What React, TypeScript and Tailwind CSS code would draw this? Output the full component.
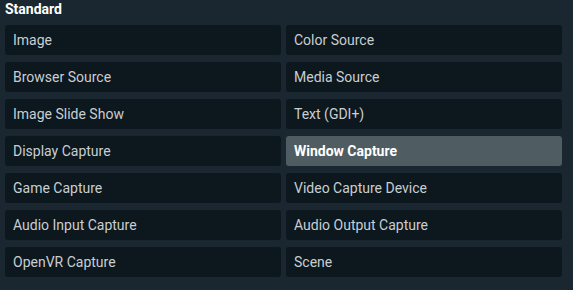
const items = [
  'Image',
  'Color Source',
  'Browser Source',
  'Media Source',
  'Image Slide Show',
  'Text (GDI+)',
  'Display Capture',
  'Window Capture',
  'Game Capture',
  'Video Capture Device',
  'Audio Input Capture',
  'Audio Output Capture',
  'OpenVR Capture',
  'Scene',
]

const selected = 'Window Capture'

export default function App() {
  return (
    <div
      className="h-[290px] w-[573px] bg-[#1a2730] pl-[5px] pt-[1px]"
      style={{ fontFamily: 'Roboto, "Liberation Sans", sans-serif' }}
    >
      <div className="h-[24px] text-[14px] font-bold leading-[16px] text-white">Standard</div>
      <div className="grid w-[557px] grid-cols-2 gap-x-[5px] gap-y-[7px]">
        {items.map((name) => {
          const active = name === selected
          return (
            <div
              key={name}
              className={
                active
                  ? 'flex h-[30px] items-center rounded-[3px] bg-[#4f5d62] pl-[8px] text-[14px] font-bold text-white'
                  : 'flex h-[30px] items-center rounded-[3px] bg-[#0c171e] pl-[8px] text-[14px] text-[#c9ced1]'
              }
            >
              {name}
            </div>
          )
        })}
      </div>
    </div>
  )
}
